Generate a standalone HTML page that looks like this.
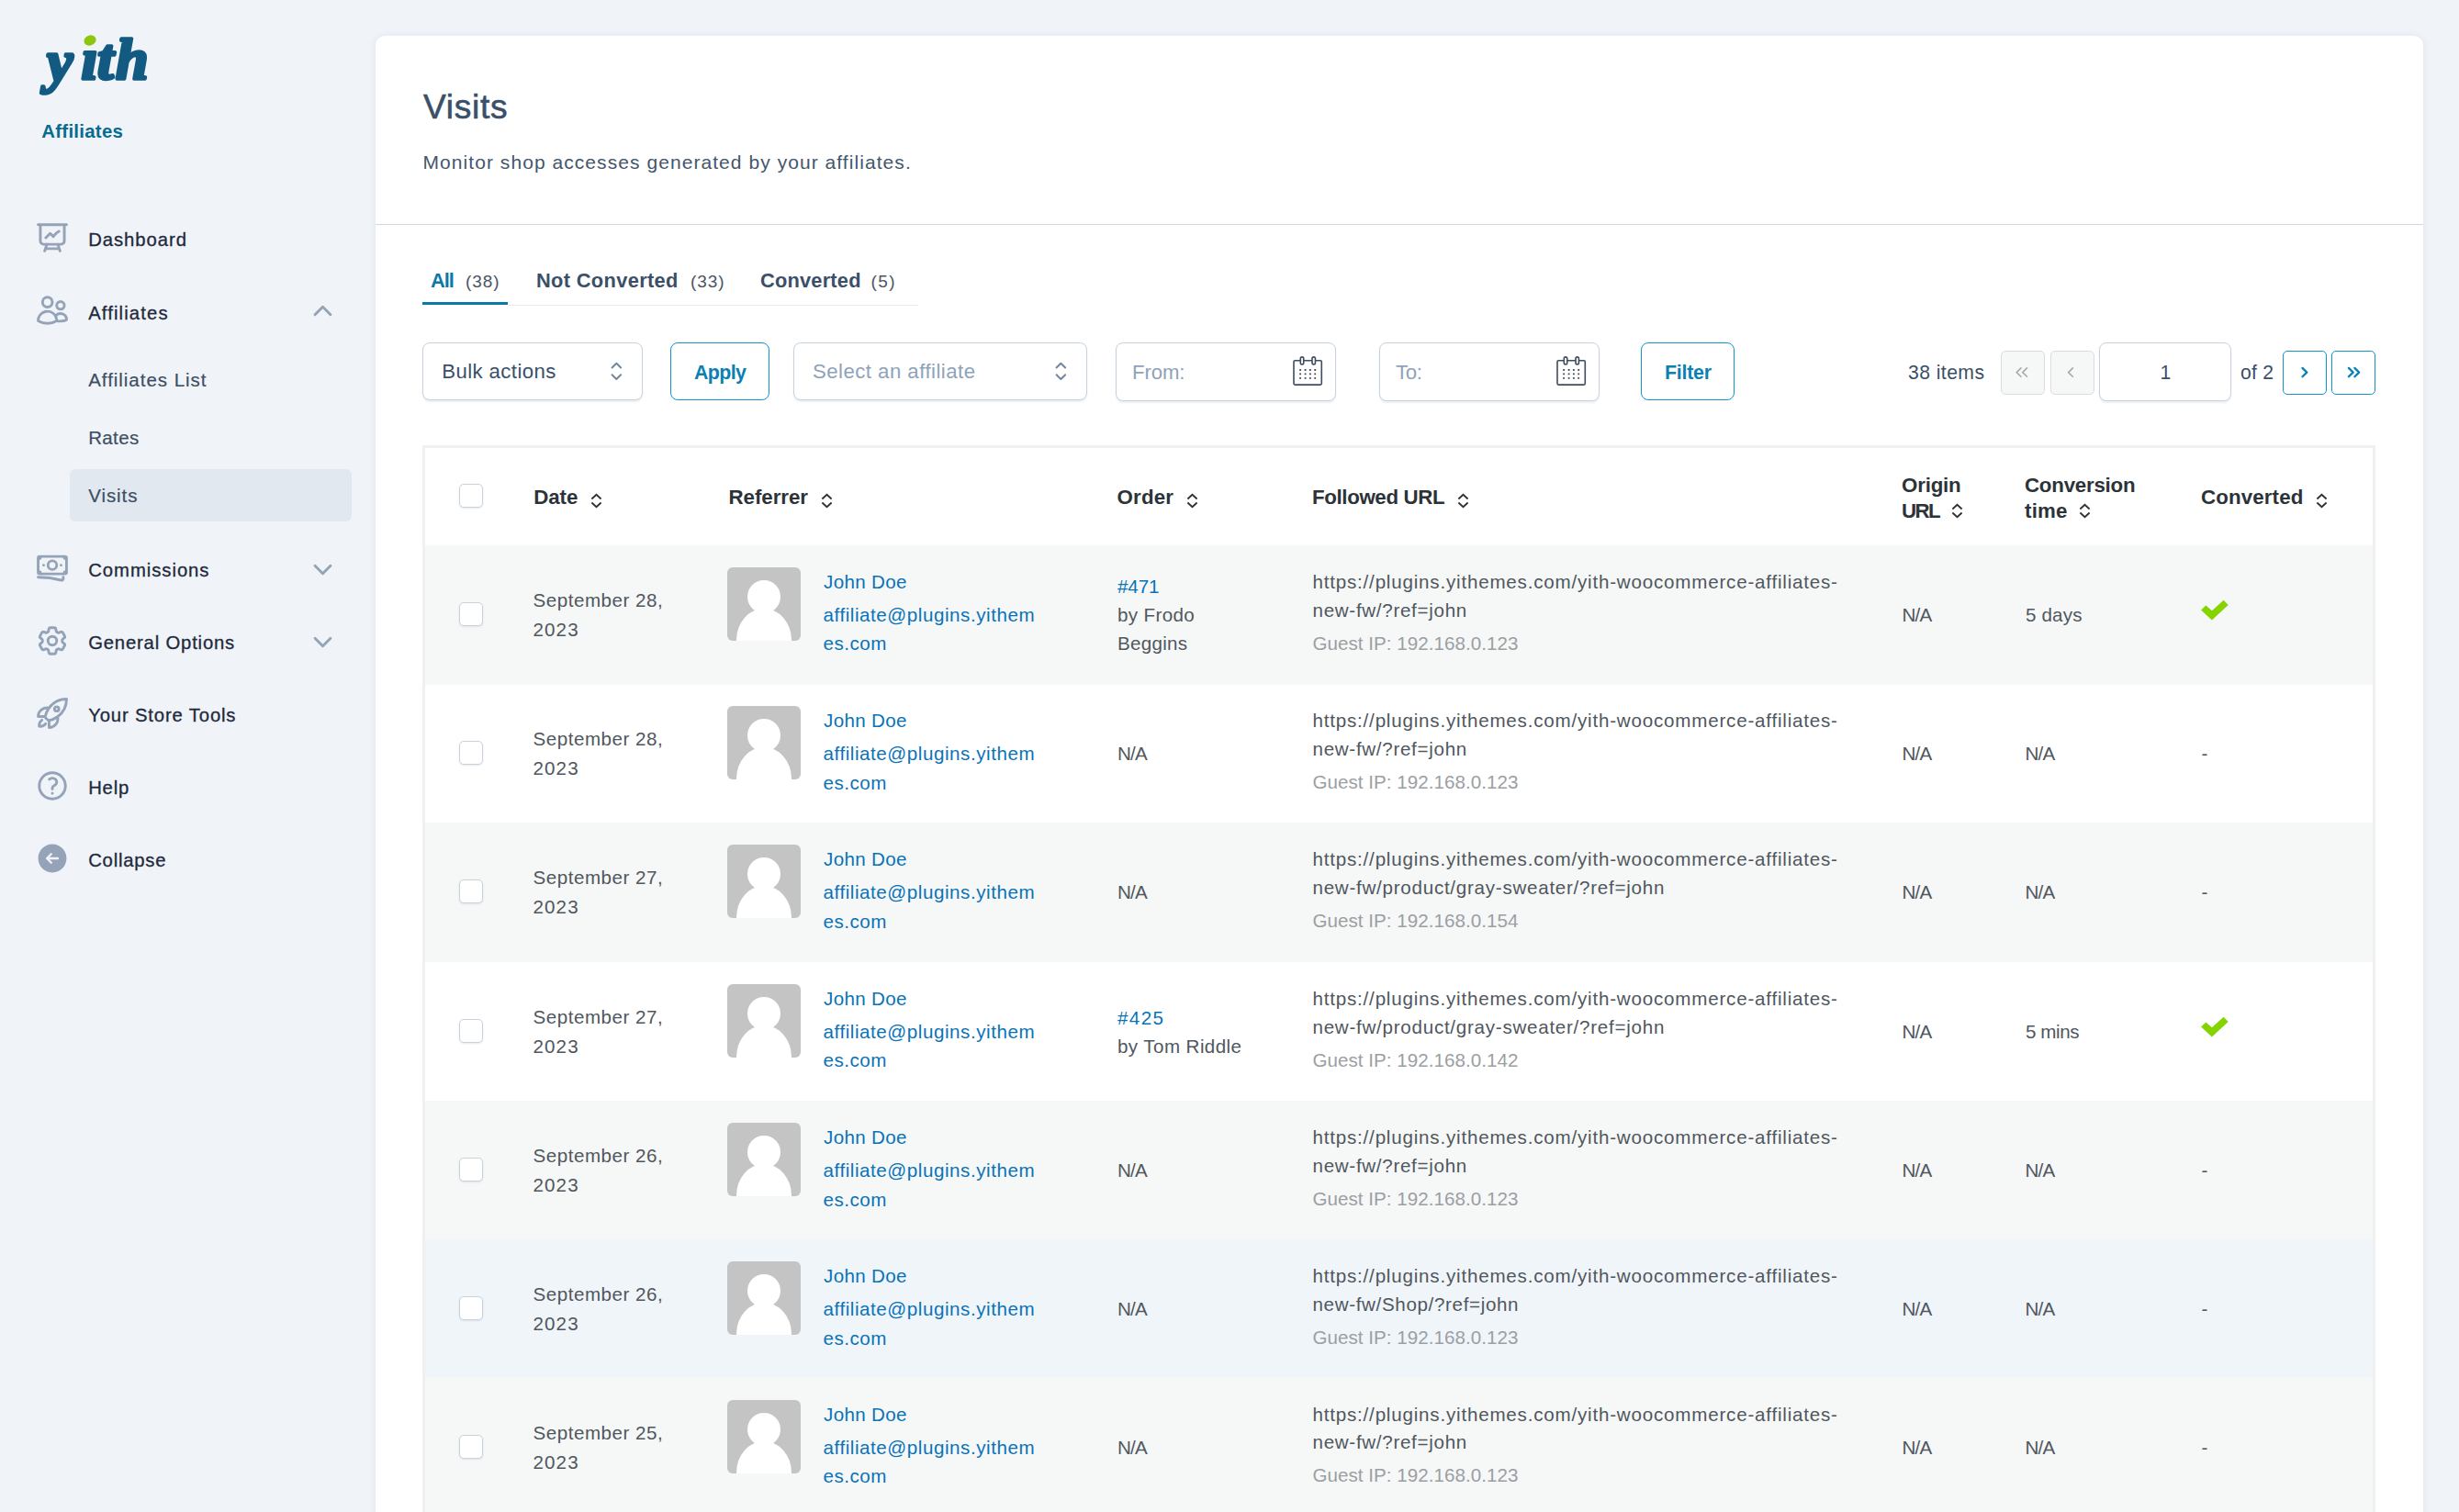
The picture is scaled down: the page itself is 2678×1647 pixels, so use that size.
<!DOCTYPE html>
<html lang="en">
<head>
<meta charset="utf-8">
<title>Visits - YITH Affiliates</title>
<style>
*{box-sizing:border-box;margin:0;padding:0}
html,body{width:2678px;height:1647px;overflow:hidden}
body{background:#f0f4f9;font-family:"Liberation Sans",sans-serif;color:#50575e;position:relative}
body div,body svg{position:absolute;white-space:nowrap}
a{color:inherit;text-decoration:none}
/* sidebar */
#logo{left:30px;top:20px;width:150px;height:100px;overflow:visible}
#brand{font-weight:bold;color:#086b90}
.nv{color:#1e293b;-webkit-text-stroke:.3px #1e293b}
.sb{color:#3d4e64;-webkit-text-stroke:.2px #3d4e64}
.ic{width:38px;height:38px;left:38px;stroke:#94a3b8;fill:none;stroke-width:1.85;stroke-linecap:round;stroke-linejoin:round}
.cv{width:27px;height:27px;stroke:#94a3b8;fill:none;stroke-width:2.6;stroke-linecap:round;stroke-linejoin:round}
#subact{left:76px;top:511px;width:307px;height:57px;border-radius:6px;background:#e2e8f0}
/* card */
#card{left:409px;top:39px;width:2230px;height:1700px;background:#fff;border-radius:10px 10px 0 0;box-shadow:0 0 7px rgba(90,120,150,.13)}
#hl{left:409px;top:243.7px;width:2230px;height:1.6px;background:#cfd9e2}
h1{position:absolute;font-weight:normal;color:#3a4f68;-webkit-text-stroke:.6px #3a4f68;white-space:nowrap}
#desc{color:#44566c}
/* tabs */
.tb{font-weight:bold;color:#3a4f68}
.tb.on{color:#0b79a8}
.tn{color:#4b5563}
#tl1{left:460px;top:329px;width:93px;height:3.4px;background:#0b79a8}
#tl2{left:553px;top:332.300px;width:447px;height:1.2px;background:#e8ecf1}
/* toolbar */
.ctl{border:1.5px solid #c8d2dc;border-radius:8px;background:#fff;box-shadow:0 1.5px 2px rgba(130,150,170,.16)}
.btn{border:1.6px solid #1096c8;border-radius:8px;background:#fff}
.bt{font-weight:bold;color:#0b80b2}
.tx{color:#3a4f68}
.ph{color:#8ea3ba}
.ud{width:30.7px;height:30.7px;stroke:#72879f;fill:none;stroke-width:1.55;stroke-linecap:round;stroke-linejoin:round}
.cal{width:36px;height:36px;stroke:#3f4d5f;fill:none;stroke-width:1.6;stroke-linejoin:round}
.pg{width:48px;height:48px;top:382px;border-radius:5px}
.pg.dis{background:#f6f7f7;border:1.5px solid #dcdcde}
.pg.en{background:#fff;border:1.6px solid #1096c8}
.pg svg{left:-1.5px;top:-1.5px;width:45px;height:45px;fill:none;stroke-width:2.3;stroke-linecap:round;stroke-linejoin:round}
.pg.dis svg{stroke:#a7aaad;stroke-width:1.6}
.pg.en svg{stroke:#0b80b2}
/* table */
#tbl{left:460px;top:485px;width:2127px;height:1300px;border:3px solid #f0f0f1;background:#fff}
.row{left:0;width:2121px;height:152.5px}
.alt{background:#f6f7f7}
.hov{background:#f0f5fa}
.cb{left:37px;width:26px;height:26px;border:1.5px solid #c8d2dc;border-radius:5px;background:#fff;box-shadow:0 1px 2px rgba(130,150,170,.2)}
.h{font-weight:bold;color:#2c3338}
.so{position:static;display:inline-block;width:13px;height:17px;margin-left:13.75px;vertical-align:-4.8px;stroke:#2c3338;fill:none;stroke-width:1.85;stroke-linejoin:miter;stroke-linecap:butt}
.s2{vertical-align:-1.1px;margin-left:12.800px}
.av{left:329px;top:24.3px;width:80px;height:80px;border-radius:6px;background:#c4c4c4;overflow:hidden}
.av:before{content:"";position:absolute;left:22px;top:14px;width:36px;height:36px;border-radius:50%;background:#fff}
.av:after{content:"";position:absolute;left:10px;top:45px;width:60px;height:80px;border-radius:30px 30px 0 0/34px 34px 0 0;background:#fff}
.lk{color:#0a73b8}
.ip{color:#9b9fa4}
.ck{left:1930px;top:55.3px;width:40px;height:32px}
</style>
</head>
<body>
<svg id="logo" viewBox="0 0 150 100"><text x="21 58.500 76 96" y="68 66 66 66" font-family="Liberation Serif, serif" font-style="italic" font-weight="bold" font-size="64" fill="#125a82" stroke="#125a82" stroke-width="3.6" stroke-linejoin="round">yith</text><circle cx="70.500" cy="23.500" r="10.500" fill="#f0f4f9"/><ellipse cx="68" cy="24" rx="6.8" ry="5.4" fill="#8cc60f" transform="rotate(-22 68 24)"/></svg>
<div id="brand" style="left:45.3px;top:127.63px;font-size:20.4px;line-height:30px;"><span style="letter-spacing:0.27px;">Affiliates</span></div>
<div id="subact"></div>
<svg class="ic" style="top:239.5px" viewBox="0 0 24 24"><path d="M3.75 3v11.25A2.25 2.25 0 0 0 6 16.5h2.25M3.75 3h-1.5m1.5 0h16.5m0 0h1.5m-1.5 0v11.25A2.25 2.25 0 0 1 18 16.5h-2.25m-7.5 0h7.5m-7.5 0-1 3m8.5-3 1 3m0 0 .5 1.5m-.5-1.5h-9.5m0 0-.5 1.5m.75-9 3-3 2.148 2.148A12.061 12.061 0 0 1 16.5 7.605"/></svg><div class="nv" style="left:96.2px;top:246.17px;font-size:20.3px;line-height:30px;"><span style="letter-spacing:0.94px;">Dashboard</span></div>
<svg class="ic" style="top:318.9px" viewBox="0 0 24 24"><path d="M15 19.128a9.38 9.38 0 0 0 2.625.372 9.337 9.337 0 0 0 4.121-.952 4.125 4.125 0 0 0-7.533-2.493M15 19.128v-.003c0-1.113-.285-2.16-.786-3.07M15 19.128v.106A12.318 12.318 0 0 1 8.624 21c-2.331 0-4.512-.645-6.374-1.766l-.001-.109a6.375 6.375 0 0 1 11.964-3.07M12 6.375a3.375 3.375 0 1 1-6.75 0 3.375 3.375 0 0 1 6.750 0Zm8.25 2.25a2.625 2.625 0 1 1-5.25 0 2.625 2.625 0 0 1 5.250 0Z"/></svg><div class="nv" style="left:96.2px;top:325.57px;font-size:20.3px;line-height:30px;"><span style="letter-spacing:1.12px;">Affiliates</span></div><svg class="cv" style="left:338.300px;top:325.2px" viewBox="0 0 24 24"><path d="m4.5 15.75 7.5-7.5 7.5 7.5"/></svg>
<svg class="ic" style="top:599.3px" viewBox="0 0 24 24"><path d="M2.25 18.75a60.07 60.07 0 0 1 15.797 2.101c.727.198 1.453-.342 1.453-1.096V18.75M3.75 4.5v.75A.75.75 0 0 1 3 6h-.75m0 0v-.375c0-.621.504-1.125 1.125-1.125H20.25M2.25 6v9m18-10.500v.75c0 .414.336.75.75.75h.75m-1.5-1.500h.375c.621 0 1.125.504 1.125 1.125v9.75c0 .621-.504 1.125-1.125 1.125h-.375m1.500-1.500H21a.75.75 0 0 0-.75.75v.75m0 0H3.75m0 0h-.375a1.125 1.125 0 0 1-1.125-1.125V15m1.500 1.500v-.75A.75.75 0 0 0 3 15h-.75M15 10.500a3 3 0 1 1-6 0 3 3 0 0 1 6 0Zm3 0h.008v.008H18V10.500Zm-12 0h.008v.008H6V10.500Z"/></svg><div class="nv" style="left:96.2px;top:605.97px;font-size:20.3px;line-height:30px;"><span style="letter-spacing:0.96px;">Commissions</span></div><svg class="cv" style="left:338.300px;top:606.6px" viewBox="0 0 24 24"><path d="m19.5 8.25-7.5 7.5-7.5-7.5"/></svg>
<svg class="ic" style="top:678.8px" viewBox="0 0 24 24"><path d="M9.594 3.94c.09-.542.56-.94 1.11-.94h2.593c.55 0 1.020.398 1.110.94l.213 1.281c.063.374.313.686.645.870.074.040.147.083.220.127.325.196.720.257 1.075.124l1.217-.456a1.125 1.125 0 0 1 1.370.490l1.296 2.247a1.125 1.125 0 0 1-.260 1.431l-1.003.827c-.293.241-.438.613-.430.992a7.723 7.723 0 0 1 0 .255c-.008.378.137.750.430.991l1.004.827c.424.350.534.955.260 1.430l-1.298 2.247a1.125 1.125 0 0 1-1.369.491l-1.217-.456c-.355-.133-.750-.072-1.076.124a6.470 6.470 0 0 1-.220.128c-.331.183-.581.495-.644.869l-.213 1.281c-.090.543-.560.940-1.110.940h-2.594c-.550 0-1.019-.398-1.110-.940l-.213-1.281c-.062-.374-.312-.686-.644-.870a6.520 6.520 0 0 1-.220-.127c-.325-.196-.720-.257-1.076-.124l-1.217.456a1.125 1.125 0 0 1-1.369-.490l-1.297-2.247a1.125 1.125 0 0 1 .260-1.431l1.004-.827c.292-.240.437-.613.430-.991a6.932 6.932 0 0 1 0-.255c.007-.380-.138-.751-.430-.992l-1.004-.827a1.125 1.125 0 0 1-.260-1.430l1.297-2.247a1.125 1.125 0 0 1 1.370-.491l1.216.456c.356.133.751.072 1.076-.124.072-.044.146-.086.220-.128.332-.183.582-.495.644-.869l.214-1.280Z"/><path d="M15 12a3 3 0 1 1-6 0 3 3 0 0 1 6 0Z"/></svg><div class="nv" style="left:96.2px;top:685.47px;font-size:20.3px;line-height:30px;"><span style="letter-spacing:0.81px;">General Options</span></div><svg class="cv" style="left:338.300px;top:686.1px" viewBox="0 0 24 24"><path d="m19.5 8.25-7.5 7.5-7.5-7.5"/></svg>
<svg class="ic" style="top:757.6px" viewBox="0 0 24 24"><path d="M15.59 14.37a6 6 0 0 1-5.84 7.38v-4.8m5.84-2.58a14.98 14.98 0 0 0 6.16-12.12A14.98 14.98 0 0 0 9.631 8.41m5.96 5.96a14.926 14.926 0 0 1-5.841 2.58m-.119-8.54a6 6 0 0 0-7.381 5.84h4.8m2.581-5.84a14.927 14.927 0 0 0-2.58 5.84m2.699 2.7c-.103.021-.207.041-.311.06a15.09 15.09 0 0 1-2.448-2.448 14.9 14.9 0 0 1 .06-.312m-2.24 2.39a4.493 4.493 0 0 0-1.757 4.306 4.493 4.493 0 0 0 4.306-1.758M16.5 9a1.5 1.5 0 1 1-3 0 1.5 1.5 0 0 1 3 0Z"/></svg><div class="nv" style="left:96.2px;top:764.27px;font-size:20.3px;line-height:30px;"><span style="letter-spacing:0.84px;">Your Store Tools</span></div>
<svg class="ic" style="top:836.8px" viewBox="0 0 24 24"><path d="M9.879 7.519c1.171-1.025 3.071-1.025 4.242 0 1.172 1.025 1.172 2.687 0 3.712-.203.179-.43.326-.67.442-.745.361-1.45.999-1.45 1.827v.75M21 12a9 9 0 1 1-18 0 9 9 0 0 1 18 0Zm-9 5.25h.008v.008H12v-.008Z"/></svg><div class="nv" style="left:96.2px;top:843.47px;font-size:20.3px;line-height:30px;"><span style="letter-spacing:0.76px;">Help</span></div>
<svg class="ic" style="top:915.5px" viewBox="0 0 24 24"><path style="fill:#94a3b8;stroke:none" fill-rule="evenodd" d="M12 2.25c-5.385 0-9.75 4.365-9.75 9.75s4.365 9.75 9.75 9.75 9.75-4.365 9.75-9.750S17.385 2.25 12 2.25Zm-4.280 9.220a.75.75 0 0 0 0 1.060l3 3a.75.75 0 1 0 1.060-1.060l-1.720-1.720h5.690a.75.75 0 0 0 0-1.500h-5.690l1.720-1.720a.75.75 0 0 0-1.060-1.060l-3 3Z"/></svg><div class="nv" style="left:96.2px;top:922.22px;font-size:20.3px;line-height:30px;"><span style="letter-spacing:0.77px;">Collapse</span></div>
<div class="sb" style="left:96.2px;top:399.40px;font-size:20.5px;line-height:30px;"><span style="letter-spacing:0.97px;">Affiliates List</span></div>
<div class="sb" style="left:96.2px;top:462.40px;font-size:20.5px;line-height:30px;"><span style="letter-spacing:0.36px;">Rates</span></div>
<div class="sb" style="left:96.2px;top:525.20px;font-size:20.5px;line-height:30px;"><span style="letter-spacing:0.92px;">Visits</span></div>
<div id="card"></div>
<div id="hl"></div>
<h1 style="left:461px;top:91.81px;font-size:37.2px;line-height:48px"><span style="letter-spacing:0.66px;">Visits</span></h1>
<div id="desc" style="left:460.5px;top:162.22px;font-size:21px;line-height:30px;"><span style="letter-spacing:1.06px;">Monitor shop accesses generated by your affiliates.</span></div>
<div class="tb on" style="left:469.0px;top:291.15px;font-size:21.8px;line-height:30px;"><span style="letter-spacing:-1.03px;">All</span></div><div class="tn" style="left:506.9px;top:292.12px;font-size:19px;line-height:30px;"><span style="letter-spacing:0.93px;">(38)</span></div>
<div class="tb" style="left:584.0px;top:291.15px;font-size:21.8px;line-height:30px;"><span style="letter-spacing:0.35px;">Not Converted</span></div><div class="tn" style="left:752.0px;top:292.12px;font-size:19px;line-height:30px;"><span style="letter-spacing:0.90px;">(33)</span></div>
<div class="tb" style="left:828.0px;top:291.15px;font-size:21.8px;line-height:30px;"><span style="letter-spacing:0.21px;">Converted</span></div><div class="tn" style="left:948.5px;top:292.12px;font-size:19px;line-height:30px;"><span style="letter-spacing:1.38px;">(5)</span></div>
<div id="tl2"></div><div id="tl1"></div>
<div class="ctl" style="left:460.2px;top:373.2px;width:239.5px;height:62.5px"></div><div class="tx" style="left:481.2px;top:389.61px;font-size:22.2px;line-height:30px;"><span style="letter-spacing:0.41px;">Bulk actions</span></div><svg class="ud" style="left:655.850px;top:389.050px" viewBox="0 0 24 24"><path d="M8.25 15 12 18.75 15.75 15m-7.5-6L12 5.25 15.75 9"/></svg>
<div class="btn" style="left:730px;top:373px;width:108px;height:63px"></div><div class="bt" style="left:756.0px;top:390.88px;font-size:21.4px;line-height:30px;"><span style="letter-spacing:-0.61px;">Apply</span></div>
<div class="ctl" style="left:864.2px;top:373.2px;width:319.8px;height:62.5px"></div><div class="ph" style="left:885.0px;top:390.11px;font-size:22.2px;line-height:30px;"><span style="letter-spacing:0.47px;">Select an affiliate</span></div><svg class="ud" style="left:1140.150px;top:389.050px" viewBox="0 0 24 24"><path d="M8.25 15 12 18.75 15.75 15m-7.5-6L12 5.25 15.75 9"/></svg>
<div class="ctl" style="left:1215px;top:373.2px;width:240px;height:63.5px"></div><div class="ph" style="left:1233.0px;top:390.61px;font-size:22.2px;line-height:30px;"><span style="letter-spacing:-0.11px;">From:</span></div><svg class="cal" style="left:1406px;top:385.8px" viewBox="0 0 36 36"><rect x="3" y="6.7" width="30.3" height="26.4" rx="1.3"/><rect x="10.3" y="2.9" width="3.45" height="7.95" rx="1.72" fill="#fff"/><rect x="23" y="2.9" width="3.45" height="7.95" rx="1.72" fill="#fff"/><g stroke="none" fill="#3f4d5f"><rect x="9.15" y="16.05" width="1.9" height="1.9" rx=".4"/><rect x="14.65" y="16.05" width="1.9" height="1.9" rx=".4"/><rect x="19.95" y="16.05" width="1.9" height="1.9" rx=".4"/><rect x="25.25" y="16.05" width="1.9" height="1.9" rx=".4"/><rect x="9.15" y="20.45" width="1.9" height="1.9" rx=".4"/><rect x="14.65" y="20.45" width="1.9" height="1.9" rx=".4"/><rect x="19.95" y="20.45" width="1.9" height="1.9" rx=".4"/><rect x="25.25" y="20.45" width="1.9" height="1.9" rx=".4"/><rect x="9.15" y="24.95" width="1.9" height="1.9" rx=".4"/><rect x="14.65" y="24.95" width="1.9" height="1.9" rx=".4"/><rect x="19.95" y="24.95" width="1.9" height="1.9" rx=".4"/><rect x="25.25" y="24.95" width="1.9" height="1.9" rx=".4"/></g></svg>
<div class="ctl" style="left:1502px;top:373.2px;width:240px;height:63.5px"></div><div class="ph" style="left:1520.0px;top:390.61px;font-size:22.2px;line-height:30px;"><span style="letter-spacing:-0.30px;">To:</span></div><svg class="cal" style="left:1692.5px;top:385.8px" viewBox="0 0 36 36"><rect x="3" y="6.7" width="30.3" height="26.4" rx="1.3"/><rect x="10.3" y="2.9" width="3.45" height="7.95" rx="1.72" fill="#fff"/><rect x="23" y="2.9" width="3.45" height="7.95" rx="1.72" fill="#fff"/><g stroke="none" fill="#3f4d5f"><rect x="9.15" y="16.05" width="1.9" height="1.9" rx=".4"/><rect x="14.65" y="16.05" width="1.9" height="1.9" rx=".4"/><rect x="19.95" y="16.05" width="1.9" height="1.9" rx=".4"/><rect x="25.25" y="16.05" width="1.9" height="1.9" rx=".4"/><rect x="9.15" y="20.45" width="1.9" height="1.9" rx=".4"/><rect x="14.65" y="20.45" width="1.9" height="1.9" rx=".4"/><rect x="19.95" y="20.45" width="1.9" height="1.9" rx=".4"/><rect x="25.25" y="20.45" width="1.9" height="1.9" rx=".4"/><rect x="9.15" y="24.95" width="1.9" height="1.9" rx=".4"/><rect x="14.65" y="24.95" width="1.9" height="1.9" rx=".4"/><rect x="19.95" y="24.95" width="1.9" height="1.9" rx=".4"/><rect x="25.25" y="24.95" width="1.9" height="1.9" rx=".4"/></g></svg>
<div class="btn" style="left:1787px;top:373px;width:102px;height:63px"></div><div class="bt" style="left:1813.0px;top:390.88px;font-size:21.4px;line-height:30px;"><span style="letter-spacing:-0.26px;">Filter</span></div>
<div class="tx" style="left:2078.0px;top:391.35px;font-size:21.2px;line-height:30px;"><span style="letter-spacing:0.42px;">38 items</span></div>
<div class="pg dis" style="left:2179px"><svg viewBox="0 0 45 45"><path d="M22 18.900 17.200 23.600 22 28.300M28.500 18.900 23.700 23.600 28.500 28.300"/></svg></div><div class="pg dis" style="left:2232.500px"><svg viewBox="0 0 45 45"><path d="M25.400 18.900 20.600 23.600 25.400 28.300"/></svg></div><div class="ctl" style="left:2286px;top:373.2px;width:144px;height:63.5px"></div><div class="tx" style="left:2352.5px;top:391.35px;font-size:21.2px;line-height:30px;"><span>1</span></div><div class="tx" style="left:2440.0px;top:391.35px;font-size:21.2px;line-height:30px;"><span style="letter-spacing:0.22px;">of 2</span></div><div class="pg en" style="left:2486px"><svg viewBox="0 0 45 45"><path d="M21.500 18.900 26.300 23.600 21.500 28.300"/></svg></div><div class="pg en" style="left:2539px"><svg viewBox="0 0 45 45"><path d="M18.900 18.900 23.700 23.600 18.900 28.300M25.400 18.900 30.200 23.600 25.400 28.300"/></svg></div>
<div id="tbl">
<div class="row" style="top:0;height:105.700px"><div class="cb" style="top:39px"></div><div class="h" style="left:118.3px;top:39.97px;font-size:22.3px;line-height:28.2px;"><span style="letter-spacing:-0.11px;">Date</span><svg class="so" viewBox="0 0 13 17"><path d="M1.4 6.5 6.5 1.8 11.600 6.500M1.400 10.500 6.500 15.200 11.600 10.500"/></svg></div><div class="h" style="left:330.5px;top:39.97px;font-size:22.3px;line-height:28.2px;"><span style="letter-spacing:-0.04px;">Referrer</span><svg class="so" viewBox="0 0 13 17"><path d="M1.4 6.5 6.5 1.8 11.600 6.500M1.400 10.500 6.500 15.200 11.600 10.500"/></svg></div><div class="h" style="left:753.5px;top:39.97px;font-size:22.3px;line-height:28.2px;"><span style="letter-spacing:0.20px;">Order</span><svg class="so" viewBox="0 0 13 17"><path d="M1.4 6.5 6.5 1.8 11.600 6.500M1.400 10.500 6.500 15.200 11.600 10.500"/></svg></div><div class="h" style="left:966.0px;top:39.97px;font-size:22.3px;line-height:28.2px;"><span style="letter-spacing:-0.37px;">Followed URL</span><svg class="so" viewBox="0 0 13 17"><path d="M1.4 6.5 6.5 1.8 11.600 6.500M1.400 10.500 6.500 15.200 11.600 10.500"/></svg></div><div class="h" style="left:1608.0px;top:27.17px;font-size:22.3px;line-height:28.2px;"><span style="letter-spacing:-0.19px;">Origin</span><br><span style="letter-spacing:-1.61px;">URL</span><svg class="so s2" viewBox="0 0 13 17"><path d="M1.4 6.5 6.5 1.8 11.600 6.500M1.400 10.500 6.500 15.200 11.600 10.500"/></svg></div><div class="h" style="left:1742.0px;top:27.17px;font-size:22.3px;line-height:28.2px;"><span style="letter-spacing:-0.23px;">Conversion</span><br><span style="letter-spacing:0.21px;">time</span><svg class="so s2" viewBox="0 0 13 17"><path d="M1.4 6.5 6.5 1.8 11.600 6.500M1.400 10.500 6.500 15.200 11.600 10.500"/></svg></div><div class="h" style="left:1934.0px;top:39.97px;font-size:22.3px;line-height:28.2px;"><span style="letter-spacing:0.13px;">Converted</span><svg class="so" viewBox="0 0 13 17"><path d="M1.4 6.5 6.5 1.8 11.600 6.500M1.400 10.500 6.500 15.200 11.600 10.500"/></svg></div></div>
<div class="row alt" style="top:105.7px"><div class="cb" style="top:62.300px"></div><div style="left:117.6px;top:44.56px;font-size:20.6px;line-height:31.8px;"><span style="letter-spacing:0.50px;">September 28,</span><br><span style="letter-spacing:1.06px;">2023</span></div><div class="av"></div><div style="left:434.0px;top:24.41px;font-size:20.6px;line-height:31.5px;"><a class="lk"><span style="letter-spacing:0.33px;">John Doe</span></a></div><div style="left:433.5px;top:60.56px;font-size:20.6px;line-height:31.2px;"><a class="lk"><span style="letter-spacing:0.55px;">affiliate@plugins.yithem</span><br><span style="letter-spacing:0.52px;">es.com</span></a></div><div style="left:754.0px;top:29.46px;font-size:20.6px;line-height:31px;"><a class="lk"><span style="letter-spacing:-0.11px;">#471</span></a><br><span style="letter-spacing:0.35px;">by Frodo</span><br><span style="letter-spacing:0.26px;">Beggins</span></div><div style="left:966.5px;top:25.11px;font-size:20.6px;line-height:30.9px;"><span style="letter-spacing:0.79px;">https://plugins.yithemes.com/yith-woocommerce-affiliates-</span><br><span style="letter-spacing:0.69px;">new-fw/?ref=john</span></div><div class="ip" style="left:966.5px;top:92.01px;font-size:20.6px;line-height:30.9px;"><span style="letter-spacing:0.03px;">Guest IP: 192.168.0.123</span></div><div style="left:1608.5px;top:60.26px;font-size:20.6px;line-height:31px;"><span style="letter-spacing:-0.77px;">N/A</span></div><div style="left:1743.0px;top:60.26px;font-size:20.6px;line-height:31px;"><span style="letter-spacing:0.16px;">5 days</span></div><svg class="ck" viewBox="0 0 40 32"><path d="M4.1 15.500 9.400 10.400 15.900 16.200 28.600 4.800 33.700 9.900 15.900 26.600Z" fill="#85d400"/></svg></div>
<div class="row" style="top:256.8px"><div class="cb" style="top:62.300px"></div><div style="left:117.6px;top:44.56px;font-size:20.6px;line-height:31.8px;"><span style="letter-spacing:0.50px;">September 28,</span><br><span style="letter-spacing:1.06px;">2023</span></div><div class="av"></div><div style="left:434.0px;top:24.41px;font-size:20.6px;line-height:31.5px;"><a class="lk"><span style="letter-spacing:0.33px;">John Doe</span></a></div><div style="left:433.5px;top:60.56px;font-size:20.6px;line-height:31.2px;"><a class="lk"><span style="letter-spacing:0.55px;">affiliate@plugins.yithem</span><br><span style="letter-spacing:0.52px;">es.com</span></a></div><div style="left:754.0px;top:60.26px;font-size:20.6px;line-height:31px;"><span style="letter-spacing:-0.77px;">N/A</span></div><div style="left:966.5px;top:25.11px;font-size:20.6px;line-height:30.9px;"><span style="letter-spacing:0.79px;">https://plugins.yithemes.com/yith-woocommerce-affiliates-</span><br><span style="letter-spacing:0.69px;">new-fw/?ref=john</span></div><div class="ip" style="left:966.5px;top:92.01px;font-size:20.6px;line-height:30.9px;"><span style="letter-spacing:0.03px;">Guest IP: 192.168.0.123</span></div><div style="left:1608.5px;top:60.26px;font-size:20.6px;line-height:31px;"><span style="letter-spacing:-0.77px;">N/A</span></div><div style="left:1742.5px;top:60.26px;font-size:20.6px;line-height:31px;"><span style="letter-spacing:-0.77px;">N/A</span></div><div style="left:1934.5px;top:60.26px;font-size:20.6px;line-height:31px;"><span>-</span></div></div>
<div class="row alt" style="top:407.9px"><div class="cb" style="top:62.300px"></div><div style="left:117.6px;top:44.56px;font-size:20.6px;line-height:31.8px;"><span style="letter-spacing:0.50px;">September 27,</span><br><span style="letter-spacing:1.06px;">2023</span></div><div class="av"></div><div style="left:434.0px;top:24.41px;font-size:20.6px;line-height:31.5px;"><a class="lk"><span style="letter-spacing:0.33px;">John Doe</span></a></div><div style="left:433.5px;top:60.56px;font-size:20.6px;line-height:31.2px;"><a class="lk"><span style="letter-spacing:0.55px;">affiliate@plugins.yithem</span><br><span style="letter-spacing:0.52px;">es.com</span></a></div><div style="left:754.0px;top:60.26px;font-size:20.6px;line-height:31px;"><span style="letter-spacing:-0.77px;">N/A</span></div><div style="left:966.5px;top:25.11px;font-size:20.6px;line-height:30.9px;"><span style="letter-spacing:0.79px;">https://plugins.yithemes.com/yith-woocommerce-affiliates-</span><br><span style="letter-spacing:0.73px;">new-fw/product/gray-sweater/?ref=john</span></div><div class="ip" style="left:966.5px;top:92.01px;font-size:20.6px;line-height:30.9px;"><span style="letter-spacing:0.03px;">Guest IP: 192.168.0.154</span></div><div style="left:1608.5px;top:60.26px;font-size:20.6px;line-height:31px;"><span style="letter-spacing:-0.77px;">N/A</span></div><div style="left:1742.5px;top:60.26px;font-size:20.6px;line-height:31px;"><span style="letter-spacing:-0.77px;">N/A</span></div><div style="left:1934.5px;top:60.26px;font-size:20.6px;line-height:31px;"><span>-</span></div></div>
<div class="row" style="top:559.7px"><div class="cb" style="top:62.300px"></div><div style="left:117.6px;top:44.56px;font-size:20.6px;line-height:31.8px;"><span style="letter-spacing:0.50px;">September 27,</span><br><span style="letter-spacing:1.06px;">2023</span></div><div class="av"></div><div style="left:434.0px;top:24.41px;font-size:20.6px;line-height:31.5px;"><a class="lk"><span style="letter-spacing:0.33px;">John Doe</span></a></div><div style="left:433.5px;top:60.56px;font-size:20.6px;line-height:31.2px;"><a class="lk"><span style="letter-spacing:0.55px;">affiliate@plugins.yithem</span><br><span style="letter-spacing:0.52px;">es.com</span></a></div><div style="left:754.0px;top:44.86px;font-size:20.6px;line-height:31px;"><a class="lk"><span style="letter-spacing:1.39px;">#425</span></a><br><span style="letter-spacing:0.41px;">by Tom Riddle</span></div><div style="left:966.5px;top:25.11px;font-size:20.6px;line-height:30.9px;"><span style="letter-spacing:0.79px;">https://plugins.yithemes.com/yith-woocommerce-affiliates-</span><br><span style="letter-spacing:0.73px;">new-fw/product/gray-sweater/?ref=john</span></div><div class="ip" style="left:966.5px;top:92.01px;font-size:20.6px;line-height:30.9px;"><span style="letter-spacing:0.03px;">Guest IP: 192.168.0.142</span></div><div style="left:1608.5px;top:60.26px;font-size:20.6px;line-height:31px;"><span style="letter-spacing:-0.77px;">N/A</span></div><div style="left:1743.0px;top:60.26px;font-size:20.6px;line-height:31px;"><span style="letter-spacing:-0.43px;">5 mins</span></div><svg class="ck" viewBox="0 0 40 32"><path d="M4.1 15.500 9.400 10.400 15.900 16.200 28.600 4.800 33.700 9.900 15.900 26.600Z" fill="#85d400"/></svg></div>
<div class="row alt" style="top:710.8px"><div class="cb" style="top:62.300px"></div><div style="left:117.6px;top:44.56px;font-size:20.6px;line-height:31.8px;"><span style="letter-spacing:0.50px;">September 26,</span><br><span style="letter-spacing:1.06px;">2023</span></div><div class="av"></div><div style="left:434.0px;top:24.41px;font-size:20.6px;line-height:31.5px;"><a class="lk"><span style="letter-spacing:0.33px;">John Doe</span></a></div><div style="left:433.5px;top:60.56px;font-size:20.6px;line-height:31.2px;"><a class="lk"><span style="letter-spacing:0.55px;">affiliate@plugins.yithem</span><br><span style="letter-spacing:0.52px;">es.com</span></a></div><div style="left:754.0px;top:60.26px;font-size:20.6px;line-height:31px;"><span style="letter-spacing:-0.77px;">N/A</span></div><div style="left:966.5px;top:25.11px;font-size:20.6px;line-height:30.9px;"><span style="letter-spacing:0.79px;">https://plugins.yithemes.com/yith-woocommerce-affiliates-</span><br><span style="letter-spacing:0.69px;">new-fw/?ref=john</span></div><div class="ip" style="left:966.5px;top:92.01px;font-size:20.6px;line-height:30.9px;"><span style="letter-spacing:0.03px;">Guest IP: 192.168.0.123</span></div><div style="left:1608.5px;top:60.26px;font-size:20.6px;line-height:31px;"><span style="letter-spacing:-0.77px;">N/A</span></div><div style="left:1742.5px;top:60.26px;font-size:20.6px;line-height:31px;"><span style="letter-spacing:-0.77px;">N/A</span></div><div style="left:1934.5px;top:60.26px;font-size:20.6px;line-height:31px;"><span>-</span></div></div>
<div class="row hov" style="top:861.8px"><div class="cb" style="top:62.300px"></div><div style="left:117.6px;top:44.56px;font-size:20.6px;line-height:31.8px;"><span style="letter-spacing:0.50px;">September 26,</span><br><span style="letter-spacing:1.06px;">2023</span></div><div class="av"></div><div style="left:434.0px;top:24.41px;font-size:20.6px;line-height:31.5px;"><a class="lk"><span style="letter-spacing:0.33px;">John Doe</span></a></div><div style="left:433.5px;top:60.56px;font-size:20.6px;line-height:31.2px;"><a class="lk"><span style="letter-spacing:0.55px;">affiliate@plugins.yithem</span><br><span style="letter-spacing:0.52px;">es.com</span></a></div><div style="left:754.0px;top:60.26px;font-size:20.6px;line-height:31px;"><span style="letter-spacing:-0.77px;">N/A</span></div><div style="left:966.5px;top:25.11px;font-size:20.6px;line-height:30.9px;"><span style="letter-spacing:0.79px;">https://plugins.yithemes.com/yith-woocommerce-affiliates-</span><br><span style="letter-spacing:0.64px;">new-fw/Shop/?ref=john</span></div><div class="ip" style="left:966.5px;top:92.01px;font-size:20.6px;line-height:30.9px;"><span style="letter-spacing:0.03px;">Guest IP: 192.168.0.123</span></div><div style="left:1608.5px;top:60.26px;font-size:20.6px;line-height:31px;"><span style="letter-spacing:-0.77px;">N/A</span></div><div style="left:1742.5px;top:60.26px;font-size:20.6px;line-height:31px;"><span style="letter-spacing:-0.77px;">N/A</span></div><div style="left:1934.5px;top:60.26px;font-size:20.6px;line-height:31px;"><span>-</span></div></div>
<div class="row alt" style="top:1012.4px"><div class="cb" style="top:62.300px"></div><div style="left:117.6px;top:44.56px;font-size:20.6px;line-height:31.8px;"><span style="letter-spacing:0.50px;">September 25,</span><br><span style="letter-spacing:1.06px;">2023</span></div><div class="av"></div><div style="left:434.0px;top:24.41px;font-size:20.6px;line-height:31.5px;"><a class="lk"><span style="letter-spacing:0.33px;">John Doe</span></a></div><div style="left:433.5px;top:60.56px;font-size:20.6px;line-height:31.2px;"><a class="lk"><span style="letter-spacing:0.55px;">affiliate@plugins.yithem</span><br><span style="letter-spacing:0.52px;">es.com</span></a></div><div style="left:754.0px;top:60.26px;font-size:20.6px;line-height:31px;"><span style="letter-spacing:-0.77px;">N/A</span></div><div style="left:966.5px;top:25.11px;font-size:20.6px;line-height:30.9px;"><span style="letter-spacing:0.79px;">https://plugins.yithemes.com/yith-woocommerce-affiliates-</span><br><span style="letter-spacing:0.69px;">new-fw/?ref=john</span></div><div class="ip" style="left:966.5px;top:92.01px;font-size:20.6px;line-height:30.9px;"><span style="letter-spacing:0.03px;">Guest IP: 192.168.0.123</span></div><div style="left:1608.5px;top:60.26px;font-size:20.6px;line-height:31px;"><span style="letter-spacing:-0.77px;">N/A</span></div><div style="left:1742.5px;top:60.26px;font-size:20.6px;line-height:31px;"><span style="letter-spacing:-0.77px;">N/A</span></div><div style="left:1934.5px;top:60.26px;font-size:20.6px;line-height:31px;"><span>-</span></div></div>
</div>
</body>
</html>
